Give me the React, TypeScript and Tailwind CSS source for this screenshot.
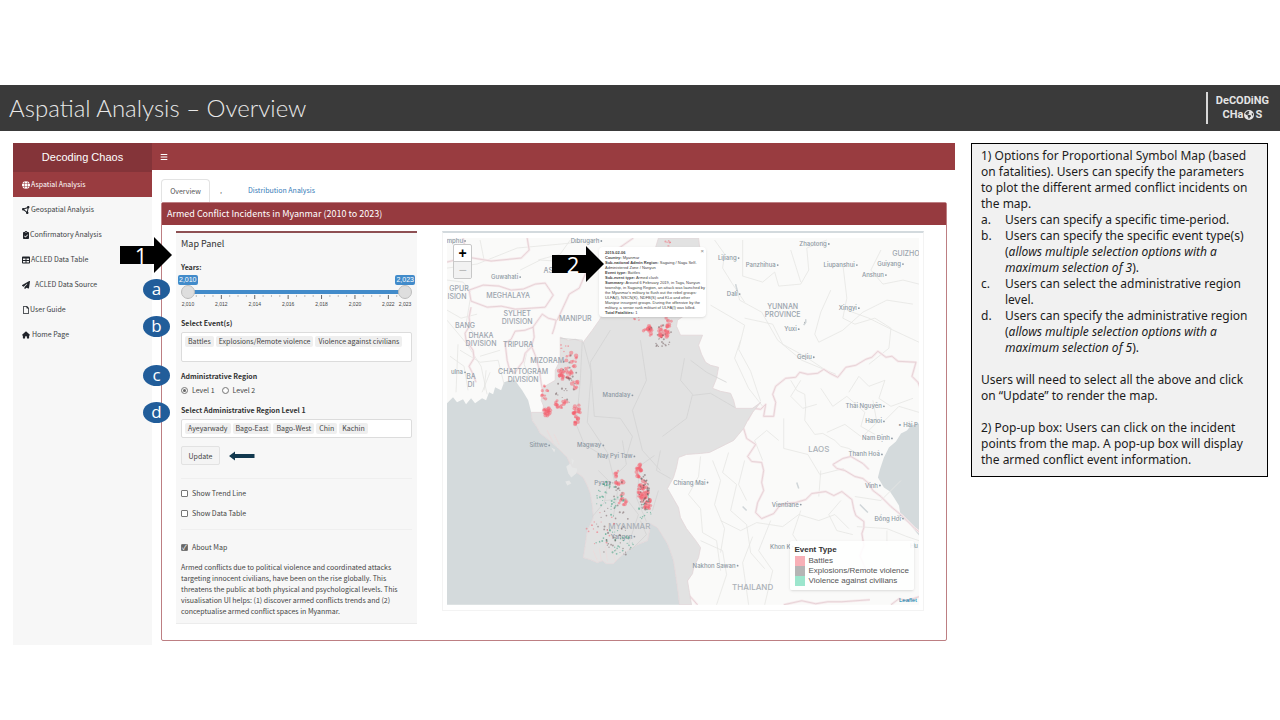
import type { ReactNode } from 'react';
import {
  FaBars,
  FaCircleNodes,
  FaClipboardCheck,
  FaEarthAmericas,
  FaGlobe,
  FaHouse,
  FaPaperPlane,
  FaRegFile,
  FaTable,
} from 'react-icons/fa6';

const navItems = [
  { label: 'Aspatial Analysis', icon: FaGlobe, gap: 'gap-px' },
  { label: 'Geospatial Analysis', icon: FaCircleNodes, gap: 'gap-px' },
  { label: 'Confirmatory Analysis', icon: FaClipboardCheck, gap: 'gap-0' },
  { label: 'ACLED Data Table', icon: FaTable, gap: 'gap-px' },
  { label: 'ACLED Data Source', icon: FaPaperPlane, gap: 'gap-[5px]' },
  { label: 'User Guide', icon: FaRegFile, gap: 'gap-0' },
  { label: 'Home Page', icon: FaHouse, gap: 'gap-0.5' },
];

const yearTicks = [2010, 2012, 2014, 2016, 2018, 2020, 2022, 2023];

const cities: [string, number, number][] = [
  ['mphu', 463, 241],
  ['Dibrugarh', 599, 241],
  ['Guwahati', 518, 277],
  ['ulna', 463, 372],
  ['Mandalay', 630, 395],
  ['Sittwe', 547, 445],
  ['Magway', 601, 445],
  ['Nay Pyi Taw', 632, 456],
  ['Pyay', 608, 482],
  ['Yangon', 632, 536],
  ['Lijiang', 736, 258],
  ['Panzhihua', 775, 265],
  ['Zhaotong', 826, 244],
  ['Liupanshui', 854, 265],
  ['Guiyang', 900, 264],
  ['Anshun', 883, 275],
  ['Dali', 737, 294],
  ['Xingyi', 856, 308],
  ['Yuxi', 796, 329],
  ['Gejiu', 811, 357],
  ['Thái Nguyên', 881, 406],
  ['Hanoi', 881, 421],
  ['Nam Định', 889, 438],
  ['Thanh Hoá', 879, 454],
  ['Vinh', 877, 485],
  ['Đồng Hới', 900, 518],
  ['Vientiane', 798, 504],
  ['Chiang Mai', 705, 482],
  ['Nakhon Sawan', 735, 565],
  ['Khon K', 790, 546],
];

const regions: [string, number, number][] = [
  ['AS', 548, 273],
  ['MEGHALAYA', 508, 298],
  ['GPUR', 459, 291],
  ['ISION', 457, 299],
  ['SYLHET', 517, 316],
  ['DIVISION', 517, 324],
  ['BANG', 465, 328],
  ['DHAKA', 481, 338],
  ['DIVISION', 481, 346],
  ['TRIPURA', 518, 347],
  ['MANIPUR', 575, 321],
  ['MIZORAM', 547, 363],
  ['CHATTOGRAM', 523, 374],
  ['DIVISION', 523, 382],
  ['BA', 471, 379],
  ['DI', 471, 387],
  ['YUNNAN', 782, 309],
  ['PROVINCE', 782, 317],
  ['GUIZHO', 905, 256],
];

const countries: [string, number, number][] = [
  ['MYANMAR', 629, 528],
  ['LAOS', 818, 452],
  ['THAILAND', 752, 589],
];

const internationalBorders = [
  'M447 262l20 -5l24 4l30 -3l8 -8l-2 -12M467 257l-4 -19',
  'M469 290l14 -5l16 1l12 4l12 -1l12 -5l10 -1l8 12l-8 12l-14 1l-16 1l-14 -3l-14 1l-16 -6zM471 307l-2 10l1 8l-5 8l1 7l7 10l1 8l-5 8l4 8l3 8',
  'M505 343l6 -4l4 -8l10 -1l8 -3l1 10l-3 10l-6 6l-2 8l-6 8l-2 4l-6 -5l-2 -8zM532 328l10 -14l6 4l8 2l-2 8l-2 6M531 345l4 10l4 14l2 14l2 10l2 8l-2 8l-2 10',
  'M557 320l12 -26l10 -6l6 -14l8 -10l20 -12l20 -14',
  'M747 420l6 -12l7 1l5 -5l-2 12l10 0l2 -14l-3 -8l3 -8l10 -8l10 -1l4 -5l8 2l10 -1l6 -4l6 4l8 4l8 -10l10 -2l10 -6l6 -2l6 -6l8 6l6 -1l6 5l18 1l-4 14l6 6l4 10l4 4',
  'M743 428l3 10l9 6l-8 12l4 5l10 1l2 8l-2 12l2 8l-6 12l-2 10l6 6l12 -5l6 -8l6 -2l10 -1l10 -3l6 -6l14 -2l8 4l8 -4l10 8l2 10l2 6l8 6v6l-2 6l2 12l-4 10l6 14l2 6l10 6l10 0',
  'M832 464l10 -6l8 -2l12 7l6 6M832 464l4 4l8 2l10 6l8 2l6 5l4 7l8 6l10 10l12 10l12 12l8 6',
  'M693 567l-10 20l6 8l8 9M783 604l18 -4l14 3l12 -2l14 0l28 -2M890 604l8 -6l8 2l12 -4',
];

const localBorders = [
  'M714 240l10 14l-2 14l10 16l12 18M742 240v36l20 6l12 -10l4 14l22 -2l8 -14l-2 -22l20 -8',
  'M710 305l24 14l10 6l-6 24l12 22l10 30M744 318l28 6l10 20l22 12l30 20M830 290l-10 22l-6 22l4 8l24 -12l20 -18l24 -12l26 4',
  'M842 264l4 34l-4 20l12 6l20 -6l16 10l-2 20l-20 16M846 310l22 8l20 10l30 14M800 380l-10 16l12 12l14 -4M820 388l12 18l14 -10l18 16l-4 14l14 8',
  'M848 392l10 -16l10 10l16 -6l-6 18l12 8l22 -8M872 400l4 22l-14 14M884 420l14 -14l20 6M860 436l-16 -12l-18 8M783 418v30l24 6l12 20l24 -6',
  'M790 380l6 10l8 4l1 12l-1 14l10 14l8 -1l12 7l6 6l8 2l10 6',
  'M762 460l-8 -20l12 -10l12 10M700 456l-2 20l-10 18l12 14l2 24l14 8l4 30M712 460l8 20l-6 24l10 24l-4 24M728 452l-6 20l14 12l-6 26l16 14l4 28l14 16',
  'M744 460l-6 24l8 16M700 540l22 10l4 24l-10 30M752 536l-10 26l6 42M770 520l-12 30l14 20l-8 34M720 520l20 10l16 -8l26 4l16 -12l20 6l16 -6l14 14',
  'M800 510l-8 24l8 12M840 500l-12 14l8 16l16 4M856 526l30 2l20 8l12 4M886 530v14M447 280l16 2l8 10M447 310l14 8l16 -4M460 350l20 12l18 -2l6 24M484 390l2 -20',
  'M500 350l-20 6M520 270l20 -10l30 2M480 240l4 20M570 240l-10 14l-22 6M790 250l10 32M900 480l-20 20l-26 -4M880 250l-10 20l12 14l20 -4l16 4M820 470l-2 26',
];

const rivers = [
  'M447 268l30 -4l40 -16l44 -4l38 -4M447 320l20 24l14 22l6 28M470 300l-4 24l18 20M530 380l-6 -16l4 -18M450 356l14 10l4 24M458 344l-2 48M490 372l-8 20',
  'M735 284l4 16l22 12l16 28l24 20l34 14M740 340l-6 18l14 30l14 18',
];

const provinceLines = [
  'M560 338l22 2l-2 40l-4 44l8 20l20 12M583 342l8 30l-4 50l20 30l10 40l-4 24M610 330l-20 32l4 54l26 2l12 18l-6 20M640 340l6 40l-14 30l10 40l18 20M684 358l-4 22l12 14l-6 24l-24 18M690 360l16 12l20 10M692 395l18 -2l24 14',
  'M598 470l10 10l-4 22l-12 14M622 440l4 24l-12 12M654 455l-14 10l-4 32l10 24M604 500l22 -2l12 16l-10 30M660 450l-4 20l14 8M640 520l6 14l-14 14M658 490l-6 20',
];

// Myanmar coastline, from the Bangladesh border down to the Tenasserim
const myanmarCoast =
  'L531 412L532 420L537 427L540 433L548 439L557 447L563 453L567 457L570 464L573 470L579 474L583 477L587 485L590 493L592 505L593 517L590 524L587 530L585 544L583 557L590 559L597 562L602 560L606 563L613 563L620 556L627 550L637 544L647 540L649 531L650 523L657 527L662 535L667 543L670 551L673 560L675 573L677 587L679 604';

const myanmarInland =
  'L691 604L689 592L687 580L692 573L693 567L698 557L700 547L696 541L693 537L686 528L680 517L678 507L674 500L670 493L667 488L673 477L676 467L678 457L686 454L700 453L709 452L717 448L725 444L733 440L738 434L743 428L747 420L752 412L760 402L752 408L735 408L733 400L730 393L720 391L712 388L716 378L718 367L710 365L705 362L701 354L698 345L702 335L680 335L676 326L677 320L686 314L694 310L698 296L702 282L705 266L702 254L699 246L698 238L658 238L652 258L640 274L622 290L606 308L599 320L592 330L583 342L575 339L568 340L560 337L560 360L555 370L555 380L543 387L541 400L546 412Z';

type Cluster = [x: number, y: number, spreadX: number, spreadY: number, count: number, size: number, fill: string];

const red = '#f5606e';
const dark = '#6b5557';
const green = '#329c79';

const clusters: Cluster[] = [
  [565, 373, 7, 7, 30, 2, red],
  [572, 360, 6, 9, 12, 2, red],
  [575, 384, 4, 5, 8, 2, red],
  [545, 393, 4, 8, 10, 2, red],
  [548, 412, 5, 5, 20, 2, red],
  [561, 404, 7, 5, 16, 2, red],
  [577, 411, 4, 8, 22, 2, red],
  [575, 423, 3, 3, 6, 2, red],
  [566, 346, 6, 6, 6, 1, red],
  [565, 390, 12, 14, 14, 1, dark],
  [569, 365, 8, 18, 12, 1, dark],
  [648, 331, 5, 5, 18, 2, red],
  [663, 331, 6, 7, 30, 2, red],
  [661, 342, 10, 5, 14, 1, dark],
  [660, 332, 12, 8, 10, 1, dark],
  [668, 322, 3, 7, 8, 2, red],
  [636, 318, 4, 3, 6, 1, red],
  [667, 243, 3, 4, 7, 1, red],
  [619, 479, 5, 9, 14, 2, red],
  [622, 500, 4, 8, 12, 2, red],
  [615, 488, 9, 10, 12, 1, dark],
  [607, 483, 4, 3, 8, 1, green],
  [638, 470, 4, 7, 18, 2, red],
  [642, 490, 5, 11, 36, 2, red],
  [647, 500, 4, 9, 22, 2, red],
  [644, 492, 5, 18, 40, 1, dark],
  [645, 508, 7, 16, 16, 1, green],
  [610, 500, 14, 18, 36, 1, green],
  [612, 520, 16, 18, 22, 1, dark],
  [612, 540, 22, 14, 38, 1, green],
  [602, 528, 16, 18, 14, 1, red],
  [616, 546, 16, 10, 16, 1, dark],
];

function noise(seed: number) {
  const value = Math.sin(seed * 12.9898) * 43758.5453;
  return value - Math.floor(value);
}

const incidents = clusters.flatMap(([x, y, spreadX, spreadY, count, size, fill], c) =>
  Array.from({ length: count }, (_, i) => {
    const seed = c * 100 + i + 1;
    const angle = noise(seed) * Math.PI * 2;
    const reach = Math.sqrt(noise(seed + 5000));
    return {
      cx: x + Math.cos(angle) * spreadX * reach,
      cy: y + Math.sin(angle) * spreadY * reach,
      r: size * (0.5 + noise(seed + 9000) * 0.6),
      fill,
    };
  }),
);

function Logo() {
  return (
    <div className="flex h-8 items-center border-l-2 border-[#d8d8d8] pl-2 text-[#e4e4e4]">
      <div className="font-['Roboto',sans-serif] text-[11px] font-bold leading-[14px]">
        <div>DeCODiNG</div>
        <div className="flex items-center justify-center">
          CHa
          <FaEarthAmericas className="mx-px size-[10px]" />S
        </div>
      </div>
    </div>
  );
}

function Sidebar() {
  return (
    <aside className="w-[139px] shrink-0 bg-[#f7f7f7]">
      <div className="flex h-[29px] items-center justify-center bg-[#843439] font-['Liberation_Sans',sans-serif] text-[11px] text-white">
        Decoding Chaos
      </div>
      <nav className="flex flex-col">
        {navItems.map(({ label, icon: Icon, gap }, index) => (
          <a
            key={label}
            href="#"
            className={`flex h-[25px] items-center pl-[9px] text-[7px] ${gap} ${
              index === 0 ? 'bg-[#993c40] text-white' : 'text-[#3b3f44]'
            }`}
          >
            <Icon className={`size-2 ${index === 0 ? '' : 'text-[#20242a]'}`} />
            <span>{label}</span>
          </a>
        ))}
      </nav>
    </aside>
  );
}

function Tag({ children }: { children: ReactNode }) {
  return (
    <span className="whitespace-nowrap rounded-xs bg-[#efefef] px-[3px] leading-[11px] text-[#444]">{children}</span>
  );
}

function TagField({ id, label, tags, tall }: { id: string; label: string; tags: string[]; tall?: boolean }) {
  return (
    <div>
      <label htmlFor={id} className="block font-bold text-[#333]">
        {label}
      </label>
      <div
        className={`mt-[3px] flex items-start gap-0.5 rounded-xs border border-[#dcdcdc] bg-white px-[3px] pt-[3px] ${
          tall ? 'h-[30px]' : 'h-[19px]'
        }`}
      >
        {tags.map((tag) => (
          <Tag key={tag}>{tag}</Tag>
        ))}
        <input id={id} type="text" className="h-3 w-0 min-w-0 flex-1 outline-none" />
      </div>
    </div>
  );
}

const thumb =
  'pointer-events-none absolute inset-x-0 top-[10px] h-[14px] w-full appearance-none bg-transparent [&::-webkit-slider-thumb]:pointer-events-auto [&::-webkit-slider-thumb]:size-[14px] [&::-webkit-slider-thumb]:appearance-none [&::-webkit-slider-thumb]:rounded-full [&::-webkit-slider-thumb]:border [&::-webkit-slider-thumb]:border-[#bdbdbd] [&::-webkit-slider-thumb]:bg-[#dedede]';

function YearSlider() {
  return (
    <fieldset>
      <legend className="font-bold text-[#333]">Years:</legend>
      <div className="relative mt-0.5 h-[34px] font-['Liberation_Sans',sans-serif]">
        <div className="-ml-[3px] -mr-[3px] flex justify-between text-[7px] leading-[10px] text-white">
          <span className="rounded-xs bg-[#428bca] px-px">2,010</span>
          <span className="rounded-xs bg-[#428bca] px-px">2,023</span>
        </div>
        <div className="mx-[7px] mt-[5px] h-[4px] bg-[#428bca]" />
        <svg className="mt-px block h-[5px] w-full overflow-visible" aria-hidden="true">
          {Array.from({ length: 27 }, (_, i) => (
            <line
              key={i}
              x1={`${3 + (i * 94) / 26}%`}
              x2={`${3 + (i * 94) / 26}%`}
              y1="0"
              y2={i % 4 === 0 || i === 26 ? 4 : 2}
              stroke={i % 4 === 0 ? '#666' : '#bbb'}
            />
          ))}
        </svg>
        <div className="relative h-2 text-[5px] leading-[8px] text-[#444]">
          {yearTicks.map((year) => (
            <span
              key={year}
              className="absolute top-0 -translate-x-1/2"
              style={{ left: `${3 + ((year - 2010) * 94) / 13}%` }}
            >
              {year.toLocaleString('en-US')}
            </span>
          ))}
        </div>
        <input type="range" aria-label="From year" min={2010} max={2023} defaultValue={2010} className={thumb} />
        <input type="range" aria-label="To year" min={2010} max={2023} defaultValue={2023} className={thumb} />
      </div>
    </fieldset>
  );
}

const checkbox =
  "flex size-[7px] appearance-none items-center justify-center rounded-[1px] border border-[#777] bg-white text-[7px] leading-none text-white checked:bg-[#666] checked:after:content-['✓']";
const radio =
  'size-[7px] appearance-none rounded-full border border-[#777] bg-white bg-clip-content p-px checked:bg-[#666]';

function MapPanel() {
  return (
    <section className="w-[241px] shrink-0 border-b border-t-2 border-b-[#ececec] border-t-[#8e5053] bg-[#f7f7f7] px-[5px] pb-[6px] pt-1 text-[7px] leading-3 text-[#444]">
      <h2 className="text-[9px] leading-[14px] text-[#333]">Map Panel</h2>
      <div className="mt-[10px]">
        <YearSlider />
      </div>
      <div className="mt-2">
        <TagField
          id="events"
          label="Select Event(s)"
          tags={['Battles', 'Explosions/Remote violence', 'Violence against civilians']}
          tall
        />
      </div>
      <fieldset className="mt-2">
        <legend className="font-bold text-[#333]">Administrative Region</legend>
        <div className="mt-0.5 flex gap-[7px]">
          <label className="flex items-center gap-1">
            <input type="radio" name="level" defaultChecked className={radio} />
            Level 1
          </label>
          <label className="flex items-center gap-1">
            <input type="radio" name="level" className={radio} />
            Level 2
          </label>
        </div>
      </fieldset>
      <div className="mt-2">
        <TagField
          id="regions"
          label="Select Administrative Region Level 1"
          tags={['Ayeyarwady', 'Bago-East', 'Bago-West', 'Chin', 'Kachin']}
        />
      </div>
      <div className="mt-2 flex items-center gap-[9px] border-b border-[#efefef] pb-[13px]">
        <button type="button" className="h-[19px] w-[39px] rounded-xs border border-[#e2e2e2] bg-[#f4f4f4]">
          Update
        </button>
        <svg viewBox="0 0 26 10" className="h-[10px] w-[26px]" aria-hidden="true">
          <path d="M0 5l6 -4.500v2.500h19.500v4h-19.500v2.500z" fill="#12394f" />
        </svg>
      </div>
      <div className="flex flex-col gap-2 border-b border-[#efefef] pb-[10px] pt-2">
        <label className="flex items-center gap-1">
          <input type="checkbox" className={checkbox} />
          Show Trend Line
        </label>
        <label className="flex items-center gap-1">
          <input type="checkbox" className={checkbox} />
          Show Data Table
        </label>
      </div>
      <label className="mt-[11px] flex items-center gap-1">
        <input type="checkbox" defaultChecked className={checkbox} />
        About Map
      </label>
      <p className="mt-[9px] whitespace-nowrap leading-[11px]">
        Armed conflicts due to political violence and coordinated attacks
        <br />
        targeting innocent civilians, have been on the rise globally. This
        <br />
        threatens the public at both physical and psychological levels. This
        <br />
        visualisation UI helps: (1) discover armed conflicts trends and (2)
        <br />
        conceptualise armed conflict spaces in Myanmar.
      </p>
    </section>
  );
}

function ConflictMap() {
  return (
    <svg viewBox="447 238 471 366" className="block w-full" role="img" aria-label="Map of conflict incidents">
      <rect x="447" y="238" width="471" height="366" fill="#fafaf9" />
      <path
        d={`M447 403L453 397L457 402L463 399L466 404L471 398L475 403L482 398L486 400L489 392L493 394L495 387L501 390L504 382L510 380L515 380L519 386L522 390L528 400${myanmarCoast}L447 604Z`}
        fill="#d4dadc"
      />
      <path d="M918 423l-8 2l-4 5l-6 3l-5 8l-7 6l-5 10l-4 12l-2 8l6 10l6 4l4 6l5 8l2 12l8 6l10 12z" fill="#d4dadc" />

      <g fill="none" stroke="#e6e6e4" strokeWidth="0.8">
        {localBorders.concat(rivers).map((d) => (
          <path key={d} d={d} strokeLinejoin="round" />
        ))}
      </g>
      <g fill="none" strokeLinejoin="round">
        {internationalBorders.map((d) => (
          <g key={d}>
            <path d={d} stroke="#f6eaec" strokeWidth="2.500" />
            <path d={d} stroke="#e4cdd2" strokeWidth="0.8" />
          </g>
        ))}
      </g>

      {/* Myanmar */}
      <path
        d={`M546 412${myanmarCoast}${myanmarInland}`}
        fill="#e2e2e2"
        stroke="#e2d6d8"
        strokeWidth="0.8"
        strokeLinejoin="round"
      />
      <g fill="none" stroke="#d3d3d3" strokeWidth="0.8" strokeLinejoin="round">
        {provinceLines.map((d) => (
          <path key={d} d={d} />
        ))}
      </g>
      {/* Islands off the Rakhine coast */}
      <path
        d="M566 466l4 -3l2 4l5 1l-1 5l-5 4l-3 -4zM565 481l4 -1l2 3l-4 2zM571 458l3 2l-2 4zM551 447l4 2l-1 3z"
        fill="#e6e7e7"
      />
      <path
        d="M593 550l4 10M599 548l2 12M605 546l2 14M611 548l4 12M547 430l6 12M554 434l5 10"
        stroke="#eadcdc"
        fill="none"
        strokeLinecap="round"
      />
      <path d="M796 482l2 6M859 504l8 8M803 325l2 -3v-3M735 284l2 8M742 506l4 4" stroke="#d0d6d9" strokeWidth="1.500" />

      <g fontFamily="Inter, sans-serif" fill="#9aa4ad">
        <g fontSize="7" fontWeight="500" textAnchor="middle">
          {regions.map(([name, x, y]) => (
            <text key={`${name}${x}${y}`} x={x} y={y}>
              {name}
            </text>
          ))}
        </g>
        <g fontSize="8" fontWeight="500" textAnchor="middle" fill="#abb1b7">
          {countries.map(([name, x, y]) => (
            <text key={name} x={x} y={y}>
              {name}
            </text>
          ))}
        </g>
        <g fontSize="6" fontWeight="500" textAnchor="end" fill="#8d98a2">
          {cities.map(([name, x, y]) => (
            <g key={name}>
              <text x={x} y={y + 2}>
                {name}
              </text>
              <circle cx={x + 2} cy={y} r="0.9" />
            </g>
          ))}
          <text x="917" y="427">
            • Hải P
          </text>
          <text x="917" y="547">
            Hu
          </text>
        </g>
      </g>

      {incidents.map((dot, i) => (
        <circle key={i} cx={dot.cx} cy={dot.cy} r={dot.r} fill={dot.fill} fillOpacity="0.5" />
      ))}
    </svg>
  );
}

const popupRows = [
  ['', '2019-02-06'],
  ['Country:', ' Myanmar'],
  ['Sub-national Admin Region:', ' Sagaing / Naga Self-'],
  ['', 'Administered Zone / Nanyun'],
  ['Event type:', ' Battles'],
  ['Sub-event type:', ' Armed clash'],
  ['Summary:', ' Around 6 February 2019, in Taga, Nanyun'],
  ['', 'township, in Sagaing Region, an attack was launched by'],
  ['', "the Myanmar's military to flush out the rebel groups:"],
  ['', 'ULFA(I), NSCN(K), NDFB(S) and KLo and other'],
  ['', 'Manipur insurgent groups. During the offensive by the'],
  ['', 'military, a senior rank militant of ULFA(I) was killed.'],
  ['Total Fatalities:', ' 1'],
];

function IncidentPopup() {
  return (
    <div className="absolute left-[152px] top-[9px] w-[107px] rounded-sm bg-white pb-[2px] pl-[6px] pt-[3px] font-['Liberation_Sans',sans-serif] text-[4px] leading-[5px] text-[#444] shadow-sm">
      {popupRows.map(([term, value], index) => (
        <div key={value} className={`whitespace-pre ${index === 0 ? 'font-bold' : ''}`}>
          {term && <strong>{term}</strong>}
          {value}
        </div>
      ))}
      <button type="button" aria-label="Close popup" className="absolute right-0.5 top-0.5 text-[6px] text-[#888]">
        ×
      </button>
    </div>
  );
}

function MapLegend() {
  return (
    <div className="absolute bottom-[15px] right-[5px] rounded-xs bg-white/90 px-[5px] pb-1 pt-[3px] text-[8px] leading-[10px] text-[#555] shadow">
      <div className="mb-px font-bold leading-[11px] text-[#333]">Event Type</div>
      <div className="flex items-center gap-1">
        <span className="h-[10px] w-[10px] bg-[#f8b0b7]" />
        Battles
      </div>
      <div className="flex items-center gap-1">
        <span className="h-[10px] w-[10px] bg-[#b5b5b5]" />
        Explosions/Remote violence
      </div>
      <div className="flex items-center gap-1">
        <span className="h-[10px] w-[10px] bg-[#9ce6cd]" />
        Violence against civilians
      </div>
    </div>
  );
}

function MapCard() {
  return (
    <section className="min-w-0 flex-1 self-start border border-t-2 border-[#f3f3f3] border-t-[#d3dade] px-1 py-[5px]">
      <div className="relative overflow-hidden font-['Liberation_Sans',sans-serif]">
        <ConflictMap />
        <div className="absolute left-[6px] top-[6px] flex w-[19px] flex-col overflow-hidden rounded-xs border border-[#c8c8c8] bg-white">
          <button type="button" className="h-[17px] border-b border-[#ccc] text-sm font-bold leading-4 text-black">
            +
          </button>
          <button type="button" className="h-4 bg-[#f2f2f2] text-sm leading-4 text-[#bbb]">
            −
          </button>
        </div>
        <IncidentPopup />
        <MapLegend />
        <a href="#" className="absolute bottom-px right-[2px] text-[6px] leading-[8px] text-[#0078a8]">
          Leaflet
        </a>
      </div>
    </section>
  );
}

function ArrowMarker({ label, className }: { label: string; className: string }) {
  return (
    <div className={`absolute flex h-9 w-[52px] items-center justify-center ${className}`}>
      <svg viewBox="0 0 52 36" className="absolute inset-0 size-full" aria-hidden="true">
        <path d="M0 9h34v-9l18 18l-18 18v-9h-34z" fill="#000" />
      </svg>
      <span className="relative pr-[10px] font-['Open_Sans',sans-serif] text-[22px] leading-6 text-white">{label}</span>
    </div>
  );
}

function StepBadge({ label, className }: { label: string; className: string }) {
  return (
    <span
      className={`absolute left-[130px] flex h-[21px] w-[27px] items-center justify-center rounded-[50%] bg-[#215d9a] pb-0.5 font-['Open_Sans',sans-serif] text-[17px] leading-4 text-white ${className}`}
    >
      {label}
    </span>
  );
}

function Dashboard() {
  return (
    <div className="relative flex min-w-0 flex-1 font-['Noto_Sans_CJK_SC',sans-serif]">
      <Sidebar />
      <div className="flex min-w-0 flex-1 flex-col">
        <header className="flex h-[27px] items-center bg-[#993c40] pl-2 text-white">
          <button type="button" aria-label="Toggle menu">
            <FaBars className="size-2" />
          </button>
        </header>
        <main className="flex flex-col pb-1 pl-[9px] pr-2 pt-[9px]">
          <div role="tablist" className="flex h-[23px] items-center text-[7px]">
            <button
              type="button"
              role="tab"
              aria-selected="true"
              className="h-full w-[49px] rounded-t-sm border border-b-0 border-[#e3e3e3] text-[#555]"
            >
              Overview
            </button>
            <span className="w-[38px] pl-[10px] text-[#555]">‚</span>
            <button type="button" role="tab" aria-selected="false" className="text-[#337ab7]">
              Distribution Analysis
            </button>
          </div>
          <div className="rounded-xs border border-[#bd7f83]">
            <h1 className="flex h-[22px] items-center bg-[#963a3f] pl-[5px] text-[9px] text-white">
              Armed Conflict Incidents in Myanmar (2010 to 2023)
            </h1>
            <div className="flex gap-[25px] pb-4 pl-[14px] pr-[22px] pt-[6px]">
              <MapPanel />
              <MapCard />
            </div>
          </div>
        </main>
      </div>
      <ArrowMarker label="1" className="left-[107px] top-[94px]" />
      <ArrowMarker label="2" className="left-[539px] top-[103px]" />
      <StepBadge label="a" className="top-[136px]" />
      <StepBadge label="b" className="top-[173px]" />
      <StepBadge label="c" className="top-[222px]" />
      <StepBadge label="d" className="top-[259px]" />
    </div>
  );
}

function Notes() {
  return (
    <aside className="w-[297px] shrink-0 self-start whitespace-nowrap border border-black bg-[#f1f1f1] px-[9px] pb-2 pt-1 font-['Noto_Sans',sans-serif] text-[12px] leading-4 text-[#1c1c1c]">
      <p>
        1) Options for Proportional Symbol Map (based
        <br />
        on fatalities). Users can specify the parameters
        <br />
        to plot the different armed conflict incidents on
        <br />
        the map.
      </p>
      <ol className="list-none">
        <li className="flex">
          <span className="w-6">a.</span>
          <span>Users can specify a specific time-period.</span>
        </li>
        <li className="flex">
          <span className="w-6">b.</span>
          <span>
            Users can specify the specific event type(s)
            <br />(<em>allows multiple selection options with a</em>
            <br />
            <em>maximum selection of 3</em>).
          </span>
        </li>
        <li className="flex">
          <span className="w-6">c.</span>
          <span>
            Users can select the administrative region
            <br />
            level.
          </span>
        </li>
        <li className="flex">
          <span className="w-6">d.</span>
          <span>
            Users can specify the administrative region
            <br />(<em>allows multiple selection options with a</em>
            <br />
            <em>maximum selection of 5</em>).
          </span>
        </li>
      </ol>
      <p className="mt-4">
        Users will need to select all the above and click
        <br />
        on “Update” to render the map.
      </p>
      <p className="mt-4">
        2) Pop-up box: Users can click on the incident
        <br />
        points from the map. A pop-up box will display
        <br />
        the armed conflict event information.
      </p>
    </aside>
  );
}

export default function App() {
  return (
    <div className="min-h-screen bg-white pt-[85px]">
      <header className="flex h-[46px] items-center justify-between bg-[#3a3a3a] pl-[9px] pr-[11px]">
        <p className="font-['Lato',sans-serif] text-2xl font-light text-[#e8e8e8]">Aspatial Analysis – Overview</p>
        <Logo />
      </header>
      <div className="flex gap-4 pl-[13px] pr-3 pt-3">
        <Dashboard />
        <Notes />
      </div>
    </div>
  );
}
